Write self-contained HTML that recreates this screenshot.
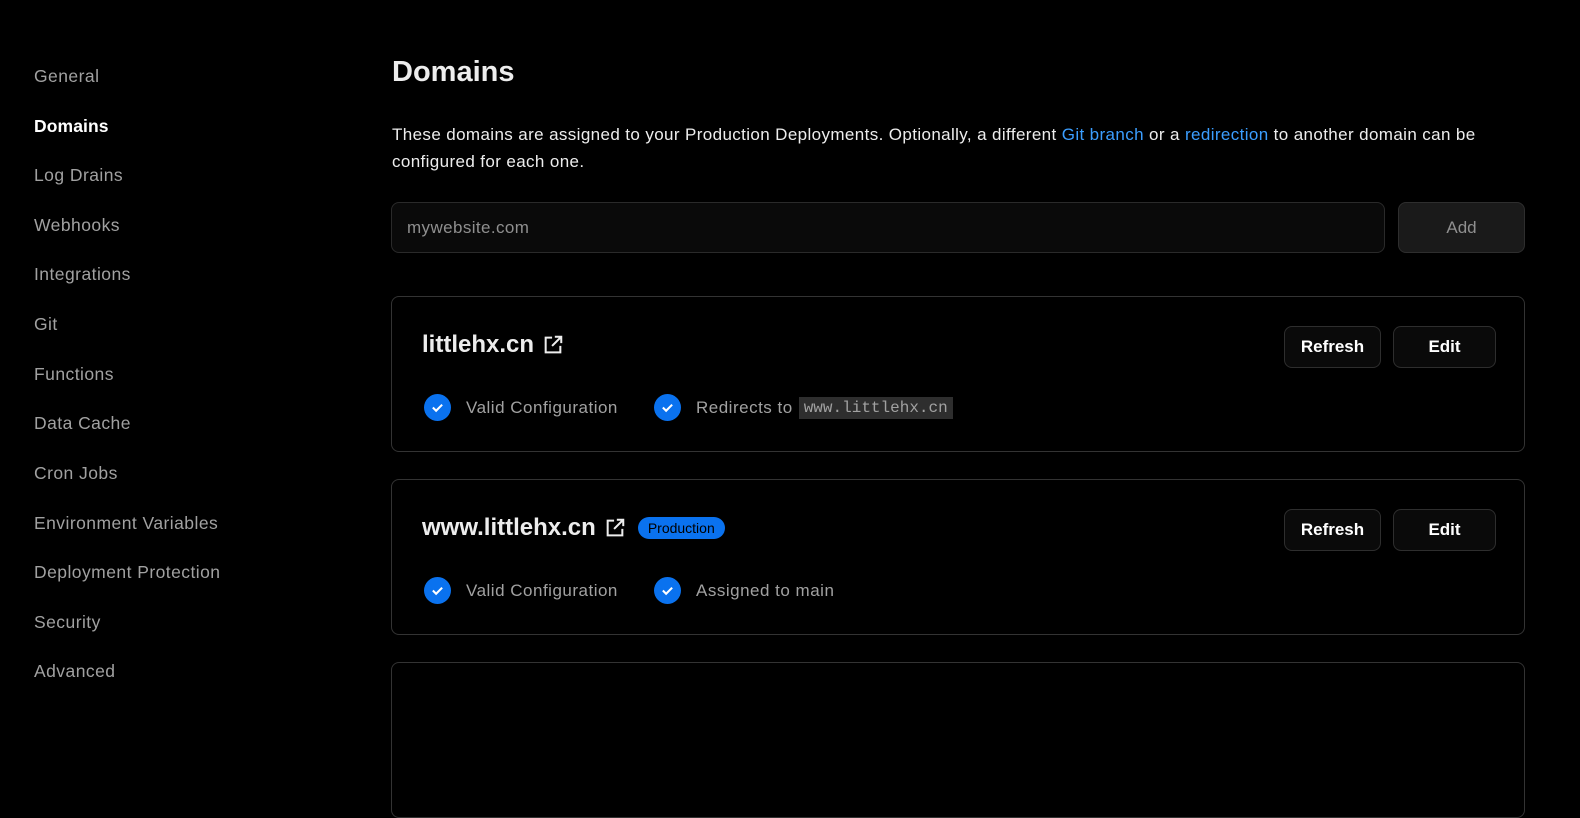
<!DOCTYPE html>
<html><head><style>
*{box-sizing:border-box;margin:0;padding:0}
body{width:1580px;height:684px;background:#000;color:#ededed;font-family:"Liberation Sans",sans-serif;overflow:hidden;position:relative}
.nav a{position:absolute;left:34px;font-size:17.5px;letter-spacing:0.45px;color:#a1a1a1;text-decoration:none}
.nav a.act{color:#fff;font-weight:700;letter-spacing:0.1px}
h1{position:absolute;left:392px;top:56px;font-size:29px;font-weight:700;color:#ededed}
.desc{position:absolute;left:392px;top:121px;width:1140px;font-size:17px;letter-spacing:0.38px;line-height:27px;color:#ededed}
.desc span{color:#3b9eff}
.input{position:absolute;left:391px;top:202px;width:994px;height:51px;border:1px solid #2a2a2a;border-radius:8px;background:#0a0a0a;color:#8f8f8f;font-size:17px;letter-spacing:0.4px;padding:15px 15px}
.add{position:absolute;left:1398px;top:202px;width:127px;height:51px;border:1px solid #2e2e2e;border-radius:8px;background:#1a1a1a;color:#8f8f8f;font-size:17px;text-align:center;line-height:49px}
.card{position:absolute;left:391px;width:1134px;height:156px;border:1px solid #333;border-radius:8px;background:#000}
.title{position:absolute;left:30px;top:34px;font-size:24px;font-weight:700;color:#ededed;display:flex;align-items:center;gap:8px}
.btn{position:absolute;top:29px;height:42px;border:1px solid #2e2e2e;border-radius:8px;background:#0a0a0a;color:#fff;font-size:17px;font-weight:700;text-align:center;line-height:40px}
.st{position:absolute;top:97px;display:flex;align-items:center;font-size:17px;letter-spacing:0.5px;color:#a1a1a1}
.ck{width:27px;height:27px;border-radius:50%;background:#0a72ef;display:inline-flex;align-items:center;justify-content:center;margin-right:15px}
code{font-family:"Liberation Mono",monospace;background:#2e2e2e;padding:2px 5px;margin-left:6px;font-size:16px;letter-spacing:0;color:#a1a1a1}
.badge{background:#0a72ef;color:#000;font-size:14px;font-weight:500;border-radius:12px;padding:3px 10px;margin-left:4px}
</style></head><body>
<div class="nav">
<a style="top:66px">General</a>
<a class="act" style="top:116px">Domains</a>
<a style="top:165px">Log Drains</a>
<a style="top:215px">Webhooks</a>
<a style="top:264px">Integrations</a>
<a style="top:314px">Git</a>
<a style="top:364px">Functions</a>
<a style="top:413px">Data Cache</a>
<a style="top:463px">Cron Jobs</a>
<a style="top:513px">Environment Variables</a>
<a style="top:562px">Deployment Protection</a>
<a style="top:612px">Security</a>
<a style="top:661px">Advanced</a>
</div>
<h1>Domains</h1>
<div class="desc">These domains are assigned to your Production Deployments. Optionally, a different <span>Git branch</span> or a <span>redirection</span> to another domain can be configured for each one.</div>
<div class="input">mywebsite.com</div>
<div class="add">Add</div>

<div class="card" style="top:296px">
<div class="title">littlehx.cn <svg width="22" height="22" viewBox="0 0 24 24" fill="none" stroke="#ededed" stroke-width="2.2"><path d="M11 4H4v16h16v-7M14 3h7v7M21 3 11 13"/></svg></div>
<div class="btn" style="left:892px;width:97px">Refresh</div>
<div class="btn" style="left:1001px;width:103px">Edit</div>
<div class="st" style="left:32px"><span class="ck"><svg width="13" height="13" viewBox="0 0 14 14"><path d="M2 7l3.5 3.5L12 4" stroke="#fff" stroke-width="2.2" fill="none"/></svg></span>Valid Configuration</div>
<div class="st" style="left:262px"><span class="ck"><svg width="13" height="13" viewBox="0 0 14 14"><path d="M2 7l3.5 3.5L12 4" stroke="#fff" stroke-width="2.2" fill="none"/></svg></span>Redirects to <code>www.littlehx.cn</code></div>
</div>

<div class="card" style="top:479px">
<div class="title">www.littlehx.cn <svg width="22" height="22" viewBox="0 0 24 24" fill="none" stroke="#ededed" stroke-width="2.2"><path d="M11 4H4v16h16v-7M14 3h7v7M21 3 11 13"/></svg><span class="badge">Production</span></div>
<div class="btn" style="left:892px;width:97px">Refresh</div>
<div class="btn" style="left:1001px;width:103px">Edit</div>
<div class="st" style="left:32px"><span class="ck"><svg width="13" height="13" viewBox="0 0 14 14"><path d="M2 7l3.5 3.5L12 4" stroke="#fff" stroke-width="2.2" fill="none"/></svg></span>Valid Configuration</div>
<div class="st" style="left:262px"><span class="ck"><svg width="13" height="13" viewBox="0 0 14 14"><path d="M2 7l3.5 3.5L12 4" stroke="#fff" stroke-width="2.2" fill="none"/></svg></span>Assigned to main</div>
</div>

<div class="card" style="top:662px"></div>
</body></html>
